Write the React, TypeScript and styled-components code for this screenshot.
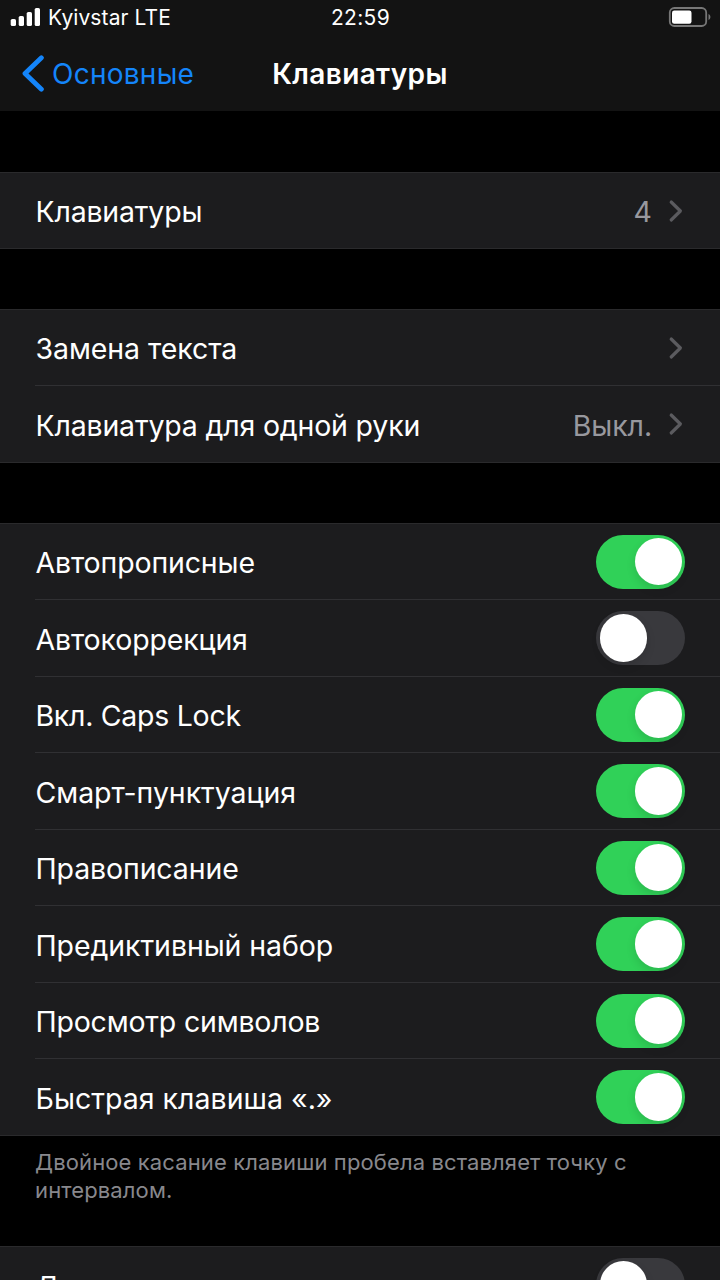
import React from "react";
import styled, { createGlobalStyle } from "styled-components";

const Global = createGlobalStyle`
  * { box-sizing: border-box; }
  html, body { margin: 0; height: 1280px; overflow: hidden; background: #000; }
  body { font-family: Inter, "Liberation Sans", sans-serif; color: #fff; }
`;

const Screen = styled.div`
  width: 720px;
  height: 1280px;
  overflow: hidden;
  background: #000;
`;

const Header = styled.header`
  height: 111px;
  background: #131313;
`;

const StatusBar = styled.div`
  display: grid;
  grid-template-columns: 1fr auto 1fr;
  align-items: center;
  height: 36px;
  padding: 0 9px 2px 10px;
  font-size: 21px;
`;

const Carrier = styled.div`
  display: flex;
  align-items: center;
  gap: 7px;
`;

const Tracked = styled.span<{ $track: number }>`
  white-space: pre;
  letter-spacing: ${(p) => p.$track}px;
`;

const BatterySlot = styled.div`
  display: flex;
  justify-content: flex-end;
`;

const NavBar = styled.nav`
  display: grid;
  grid-template-columns: 1fr auto 1fr;
  align-items: center;
  height: 75px;
  padding: 0 22px;
`;

const Back = styled.a`
  display: flex;
  align-items: center;
  gap: 8px;
  color: #1485fa;
  font-size: 28px;
`;

const Title = styled.h1`
  margin: 0;
  font-size: 28px;
  font-weight: 600;
`;

const Group = styled.section<{ $gap?: number }>`
  margin-top: ${(p) => p.$gap ?? 0}px;
  padding-bottom: 0.8px;
  background: #1c1c1e;
  box-shadow: inset 0 1px #2a2a2c, inset 0 -1px #2a2a2c;
`;

const Row = styled.div`
  display: flex;
  align-items: center;
  height: 76.5px;
  margin-left: 35px;
  padding-right: 35px;
  border-top: 1px solid transparent;
  font-size: 28.5px;
  & + & { border-top-color: #303033; }
`;

const Label = styled(Tracked)<{ $drop?: number }>`
  flex: 1;
  padding: ${(p) => p.$drop ?? 2}px 0 0 0.5px;
`;

const Value = styled(Tracked)`
  margin-right: 16px;
  padding-top: 2px;
  color: #98989e;
`;

const Track = styled.span<{ $on: boolean }>`
  display: flex;
  align-items: center;
  width: 89px;
  height: 54px;
  padding: 0 3px 0 3.5px;
  border-radius: 27px;
  justify-content: ${(p) => (p.$on ? "flex-end" : "flex-start")};
  background: ${(p) => (p.$on ? "#30d158" : "#39393d")};
`;

const Knob = styled.span`
  width: 47.5px;
  height: 47.5px;
  border-radius: 50%;
  background: #fff;
  box-shadow: 0 4px 10px rgba(0, 0, 0, 0.12);
`;

const Note = styled.p`
  margin: 0;
  height: 110.3px;
  padding: 12.8px 35px 0;
  color: #88888d;
  font-size: 22px;
  line-height: 28px;
  letter-spacing: 0.12px;
`;

const Chevron = () => (
  <svg width="17" height="24" viewBox="0 0 17 24" fill="none">
    <path d="M3.2 3L12.4 12L3.2 21" stroke="#5b5b5f" strokeWidth="3.2" strokeLinecap="round" strokeLinejoin="round" />
  </svg>
);

const Switch = ({ on }: { on: boolean }) => (
  <Track $on={on}><Knob /></Track>
);

const toggles: [string, boolean, number][] = [
  ["Автопрописные", true, -0.15],
  ["Автокоррекция", false, -0.15],
  ["Вкл. Caps Lock", true, -0.28],
  ["Смарт-пунктуация", true, -0.06],
  ["Правописание", true, -0.12],
  ["Предиктивный набор", true, -0.08],
  ["Просмотр символов", true, -0.2],
  ["Быстрая клавиша «.»", true, 0.02],
];

export default function App() {
  return (
    <Screen>
      <Global />
      <Header>
        <StatusBar>
          <Carrier>
            <svg width="31" height="20" viewBox="0 0 31 20" fill="#fff">
              <rect x="0.7" y="12" width="5.3" height="7" rx="1.6" />
              <rect x="8.7" y="9" width="5.3" height="10" rx="1.6" />
              <rect x="16.7" y="5" width="5.3" height="14" rx="1.6" />
              <rect x="24.7" y="1" width="5.3" height="18" rx="1.6" />
            </svg>
            <Tracked $track={0.1}>Kyivstar LTE</Tracked>
          </Carrier>
          <Tracked $track={0.35}>22:59</Tracked>
          <BatterySlot>
            <svg width="43" height="20" viewBox="0 0 43 20" fill="none">
              <rect x="1.8" y="1" width="36.4" height="18" rx="4.5" stroke="#777" strokeWidth="1.8" />
              <rect x="4" y="3.5" width="19.5" height="13.2" rx="2.2" fill="#fff" />
              <path d="M40.5 7C43 8.2 43 11.8 40.5 13Z" fill="#777" />
            </svg>
          </BatterySlot>
        </StatusBar>
        <NavBar>
          <Back>
            <svg width="22" height="38" viewBox="0 0 22 38" fill="none">
              <path d="M19.4 2.8L3 18.5L19.4 34.2" stroke="#1485fa" strokeWidth="4.8" strokeLinecap="round" strokeLinejoin="round" />
            </svg>
            <Tracked $track={0.25}>Основные</Tracked>
          </Back>
          <Title><Tracked $track={0.35}>Клавиатуры</Tracked></Title>
        </NavBar>
      </Header>
      <Group $gap={61}>
        <Row><Label $track={-0.2}>Клавиатуры</Label><Value $track={0}>4</Value><Chevron /></Row>
      </Group>
      <Group $gap={59.6}>
        <Row><Label $track={-0.08}>Замена текста</Label><Chevron /></Row>
        <Row><Label $track={-0.18}>Клавиатура для одной руки</Label><Value $track={-0.1}>Выкл.</Value><Chevron /></Row>
      </Group>
      <Group $gap={60.2}>
        {toggles.map(([name, on, track]) => (
          <Row key={name}><Label $track={track}>{name}</Label><Switch on={on} /></Row>
        ))}
      </Group>
      <Note>Двойное касание клавиши пробела вставляет точку с интервалом.</Note>
      <Group>
        <Row><Label $track={-0.1} $drop={4}>Диктовка</Label><Switch on={false} /></Row>
      </Group>
    </Screen>
  );
}
